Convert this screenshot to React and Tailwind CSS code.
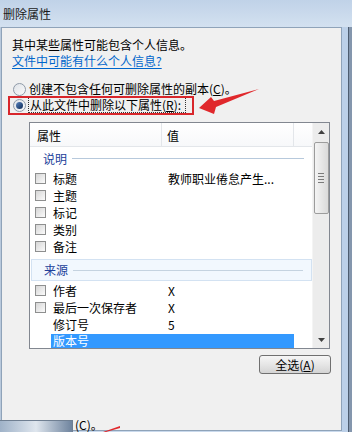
import React from "react";

const font = "font-['Noto_Sans_CJK_SC','Noto_Sans',sans-serif]";

function Checkbox() {
  return (
    <div className="w-[11px] h-[11px] border border-[#8e8f8f] bg-gradient-to-br from-[#d6d6d6] to-[#fbfbfb] shrink-0" />
  );
}

function Row({ name, value, check = true, selected = false }) {
  return (
    <div className="h-[17px] flex items-center text-[12px] leading-[17px] text-black">
      <div className="w-[21px] pl-[5px] flex items-center shrink-0">
        {check ? <Checkbox /> : null}
      </div>
      {selected ? (
        <div className="w-[243px] h-[14px] bg-[#3399ff] text-white pl-[2px] flex items-center leading-[14px]">
          {name}
        </div>
      ) : (
        <>
          <div className="w-[117px] pl-[2px] shrink-0 whitespace-nowrap">{name}</div>
          <div className="whitespace-nowrap">{value}</div>
        </>
      )}
    </div>
  );
}

function Radio({ checked }) {
  return (
    <div className="w-[13px] h-[13px] rounded-full border border-[#8f9aa8] bg-gradient-to-br from-[#dfe3e8] to-[#fafafa] flex items-center justify-center shrink-0">
      {checked ? (
        <div className="w-[7px] h-[7px] rounded-full bg-gradient-to-br from-[#5b86c2] to-[#0d2a55]" />
      ) : null}
    </div>
  );
}

export default function App() {
  return (
    <div className={`w-[352px] h-[432px] relative overflow-hidden bg-[#c9d9ec] ${font}`}>
      {/* title bar */}
      <div className="h-[27px] flex items-center pl-[3px] text-[12px] text-[#1b1b1b] bg-gradient-to-b from-[#c0d2e8] to-[#d3e1f0]">
        删除属性
      </div>
      <div className="flex h-[405px]">
        <div className="w-[1px] bg-[#b9c9dc]" />
        {/* dialog panel */}
        <div className="w-[341px] h-[404px] border border-[#8fa3b9] bg-[#f0f0f0] flex flex-col text-[12px] text-black">
          <div className="pt-[9px] pl-[10px]">
            <div className="h-[16px] leading-[16px]">其中某些属性可能包含个人信息。</div>
            <div className="h-[16px] leading-[16px] text-[#0066cc] underline underline-offset-2">
              文件中可能有什么个人信息?
            </div>
          </div>
          <div className="mt-[12px] pl-[11px]">
            <div className="h-[16px] flex items-center gap-[3px]">
              <Radio />
              <span className="leading-[16px] whitespace-nowrap">
                创建不包含任何可删除属性的副本(<span className="underline">C</span>)。
              </span>
            </div>
            <div className="h-[16px] flex items-center gap-[2px]">
              <Radio checked />
              <span className="leading-[14px] whitespace-nowrap border border-dotted border-[#333] pr-[4px] pl-[1px]">
                从此文件中删除以下属性(<span className="underline">R</span>):
              </span>
            </div>
          </div>
          {/* list box */}
          <div className="mt-[9px] ml-[27px] w-[301px] h-[227px] border border-[#828790] bg-white flex">
            <div className="w-[282px] flex flex-col overflow-hidden">
              <div className="h-[24px] shrink-0 flex border-b border-[#e3e6ea] bg-gradient-to-b from-white to-[#f7f8fa]">
                <div className="w-[132px] border-r border-[#e3e6ea] pl-[7px] pt-[5px] leading-[16px]">属性</div>
                <div className="w-[132px] border-r border-[#e3e6ea] pl-[5px] pt-[5px] leading-[16px]">值</div>
              </div>
              <div className="h-[23px] shrink-0 flex items-center pl-[13px]">
                <span className="text-[#21409a] leading-[16px]">说明</span>
                <div className="flex-1 h-[1px] bg-[#b7c9dc] ml-[5px] mr-[8px]" />
              </div>
              <Row name="标题" value="教师职业倦怠产生..." />
              <Row name="主题" value="" />
              <Row name="标记" value="" />
              <Row name="类别" value="" />
              <Row name="备注" value="" />
              <div className="mt-[4px] ml-[1px] h-[22px] shrink-0 flex items-center pl-[12px] border border-[#d3e2f2] bg-[#f2f8fe]">
                <span className="text-[#21409a] leading-[16px]">来源</span>
                <div className="flex-1 h-[1px] bg-[#c5d3e0] ml-[5px] mr-[8px]" />
              </div>
              <div className="mt-[1px]" />
              <Row name="作者" value="X" />
              <Row name="最后一次保存者" value="X" />
              <Row name="修订号" value="5" check={false} />
              <Row name="版本号" value="" check={false} selected />
            </div>
            {/* scrollbar */}
            <div className="w-[17px] bg-[#ececec] border-l border-[#f4f4f4] flex flex-col items-center">
              <div className="h-[18px] w-full flex items-center justify-center text-[#3b3b3b]">
                <svg width="7" height="4" viewBox="0 0 7 4"><path d="M0 4 L3.5 0 L7 4 Z" fill="#404040" /></svg>
              </div>
              <div className="mt-[1px] w-[15px] h-[72px] rounded-[2px] border border-[#9c9c9c] bg-gradient-to-r from-[#f4f4f4] to-[#dadada] flex flex-col items-center justify-center gap-[2px]">
                <div className="w-[6px] h-[1px] bg-[#7a7a7a]" />
                <div className="w-[6px] h-[1px] bg-[#7a7a7a]" />
                <div className="w-[6px] h-[1px] bg-[#7a7a7a]" />
                <div className="w-[6px] h-[1px] bg-[#7a7a7a]" />
              </div>
              <div className="flex-1" />
              <div className="h-[17px] w-full flex items-center justify-center">
                <svg width="7" height="4" viewBox="0 0 7 4"><path d="M0 0 L3.5 4 L7 0 Z" fill="#404040" /></svg>
              </div>
            </div>
          </div>
          <div className="flex justify-end mt-[6px] mr-[10px]">
            <div className="w-[72px] h-[19px] rounded-[3px] border border-[#707070] bg-gradient-to-b from-[#f6f6f6] via-[#e6e6e6] to-[#d4d4d4] flex items-center justify-center leading-[16px]">
              全选(<span className="underline">A</span>)
            </div>
          </div>
        </div>
        <div className="flex-1 flex">
          <div className="w-[6px] bg-[#bcd0e8]" />
          <div className="w-[1px] bg-[#4e5d70]" />
          <div className="flex-1 bg-[#8496ad]" />
        </div>
      </div>

      {/* red annotation box */}
      <div className="absolute left-[8px] top-[96px] w-[186px] h-[19px] border-2 border-[#d8262b]" />
      {/* red arrow */}
      <svg className="absolute left-0 top-0" width="352" height="432" viewBox="0 0 352 432">
        <path d="M199 108 L211 97 L214 101 L259 89 L216 107 L214 114 Z" fill="#e0282c" />
      </svg>

      {/* bottom overlapped fragment */}
      <div className="absolute left-0 top-[420px] w-[73px] h-[12px] border-t border-r border-[#6f7f92] bg-gradient-to-r from-[#9fb2c8] via-[#dfe6ee] to-[#6f849e]" />
      <div className="absolute left-[75px] top-[418px] h-[13px] text-[12px] leading-[13px] text-black">(C)。</div>
      <svg className="absolute left-[100px] top-[424px]" width="22" height="8" viewBox="0 0 22 8">
        <path d="M3 8 L20 2 L20 4 L6 8 Z" fill="#e0282c" />
      </svg>
    </div>
  );
}
